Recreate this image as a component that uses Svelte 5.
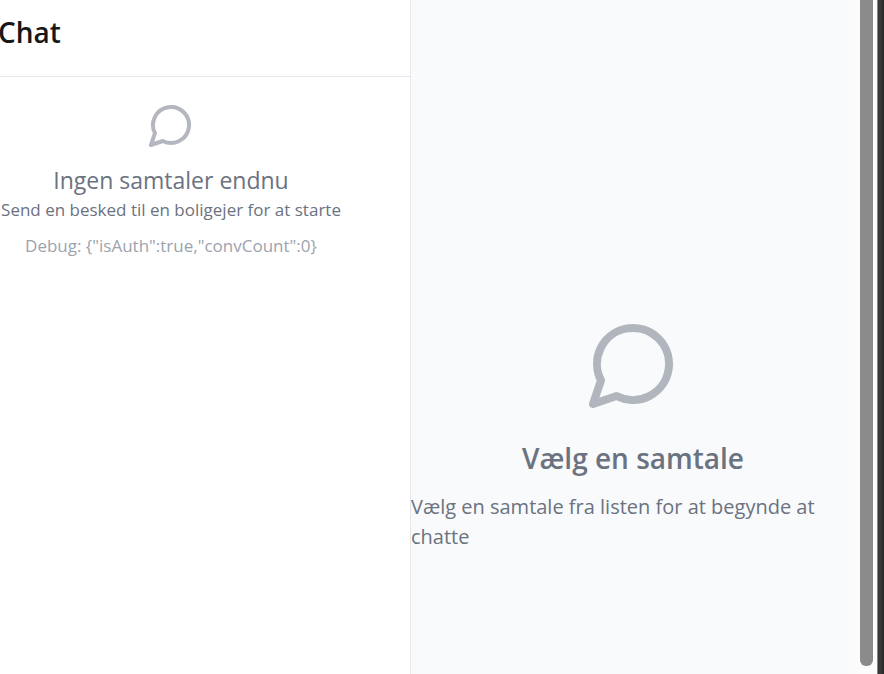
<script>
  const debug = { isAuth: true, convCount: 0 };
</script>

{#snippet bubble()}
  <svg class="bubble" viewBox="0 0 24 24" aria-hidden="true">
    <path d="M7.9 20A9 9 0 1 0 4 16.1L2 22Z" />
  </svg>
{/snippet}

<div class="app">
  <aside>
    <header><h1>Chat</h1></header>
    <div class="empty">
      {@render bubble()}
      <p class="title">Ingen samtaler endnu</p>
      <p class="hint">Send en besked til en boligejer for at starte</p>
      <p class="debug">Debug: {JSON.stringify(debug)}</p>
    </div>
  </aside>
  <main>
    {@render bubble()}
    <h2>Vælg en samtale</h2>
    <p>Vælg en samtale fra listen for at begynde at chatte</p>
  </main>
  <div class="track" aria-hidden="true"><div class="thumb"></div></div>
  <div class="edge" aria-hidden="true"></div>
</div>

<style>
  :global(body) {
    margin: 0;
    overflow: hidden;
    background: #fff;
  }
  .app {
    display: flex;
    height: 100vh;
    overflow: hidden;
    font-family: "Segoe UI", "Open Sans", "Noto Sans", sans-serif;
    color: #6b7280;
  }
  h1, h2, p {
    margin: 0;
  }
  aside {
    box-sizing: border-box;
    flex: 0 0 411px;
    border-right: 1px solid #e5e7eb;
    background: #fff;
  }
  header {
    box-sizing: border-box;
    height: 77px;
    padding-top: 12px;
    border-bottom: 1px solid #e5e7eb;
  }
  h1 {
    margin-left: -2px;
    font-size: 28px;
    line-height: 40px;
    font-weight: 600;
    color: #171717;
  }
  .bubble {
    display: block;
    fill: none;
    stroke: currentColor;
    stroke-width: 2;
    stroke-linecap: round;
    stroke-linejoin: round;
    opacity: 0.5;
  }
  .empty {
    display: flex;
    flex-direction: column;
    align-items: center;
    margin-right: 68px;
    padding-top: 24px;
    white-space: nowrap;
  }
  .empty .bubble {
    width: 48px;
    height: 48px;
    margin-bottom: 14px;
  }
  .title {
    font-size: 23px;
    line-height: 34px;
  }
  .hint {
    font-size: 17px;
    line-height: 26px;
  }
  .debug {
    margin-top: 10px;
    font-size: 17px;
    line-height: 26px;
    color: #9ca3af;
  }
  main {
    box-sizing: border-box;
    display: flex;
    flex: 1;
    flex-direction: column;
    align-items: center;
    min-width: 0;
    padding-top: 316px;
    background: #f9fafb;
  }
  main .bubble {
    width: 96px;
    height: 96px;
    margin-bottom: 26px;
  }
  h2 {
    margin-bottom: 14px;
    font-size: 28px;
    line-height: 40px;
    font-weight: 600;
  }
  main p {
    font-size: 20px;
    line-height: 30px;
  }
  .track {
    box-sizing: border-box;
    flex: 0 0 22px;
    padding: 0 4px 8px 5px;
    background: #fcfcfc;
  }
  .thumb {
    height: 100%;
    border-radius: 0 0 6px 6px;
    background: #8b8b8b;
  }
  .edge {
    box-sizing: border-box;
    flex: 0 0 7px;
    border-left: 1px solid #858585;
    border-right: 2px solid #2b2b2b;
    background: #383838;
  }
</style>
